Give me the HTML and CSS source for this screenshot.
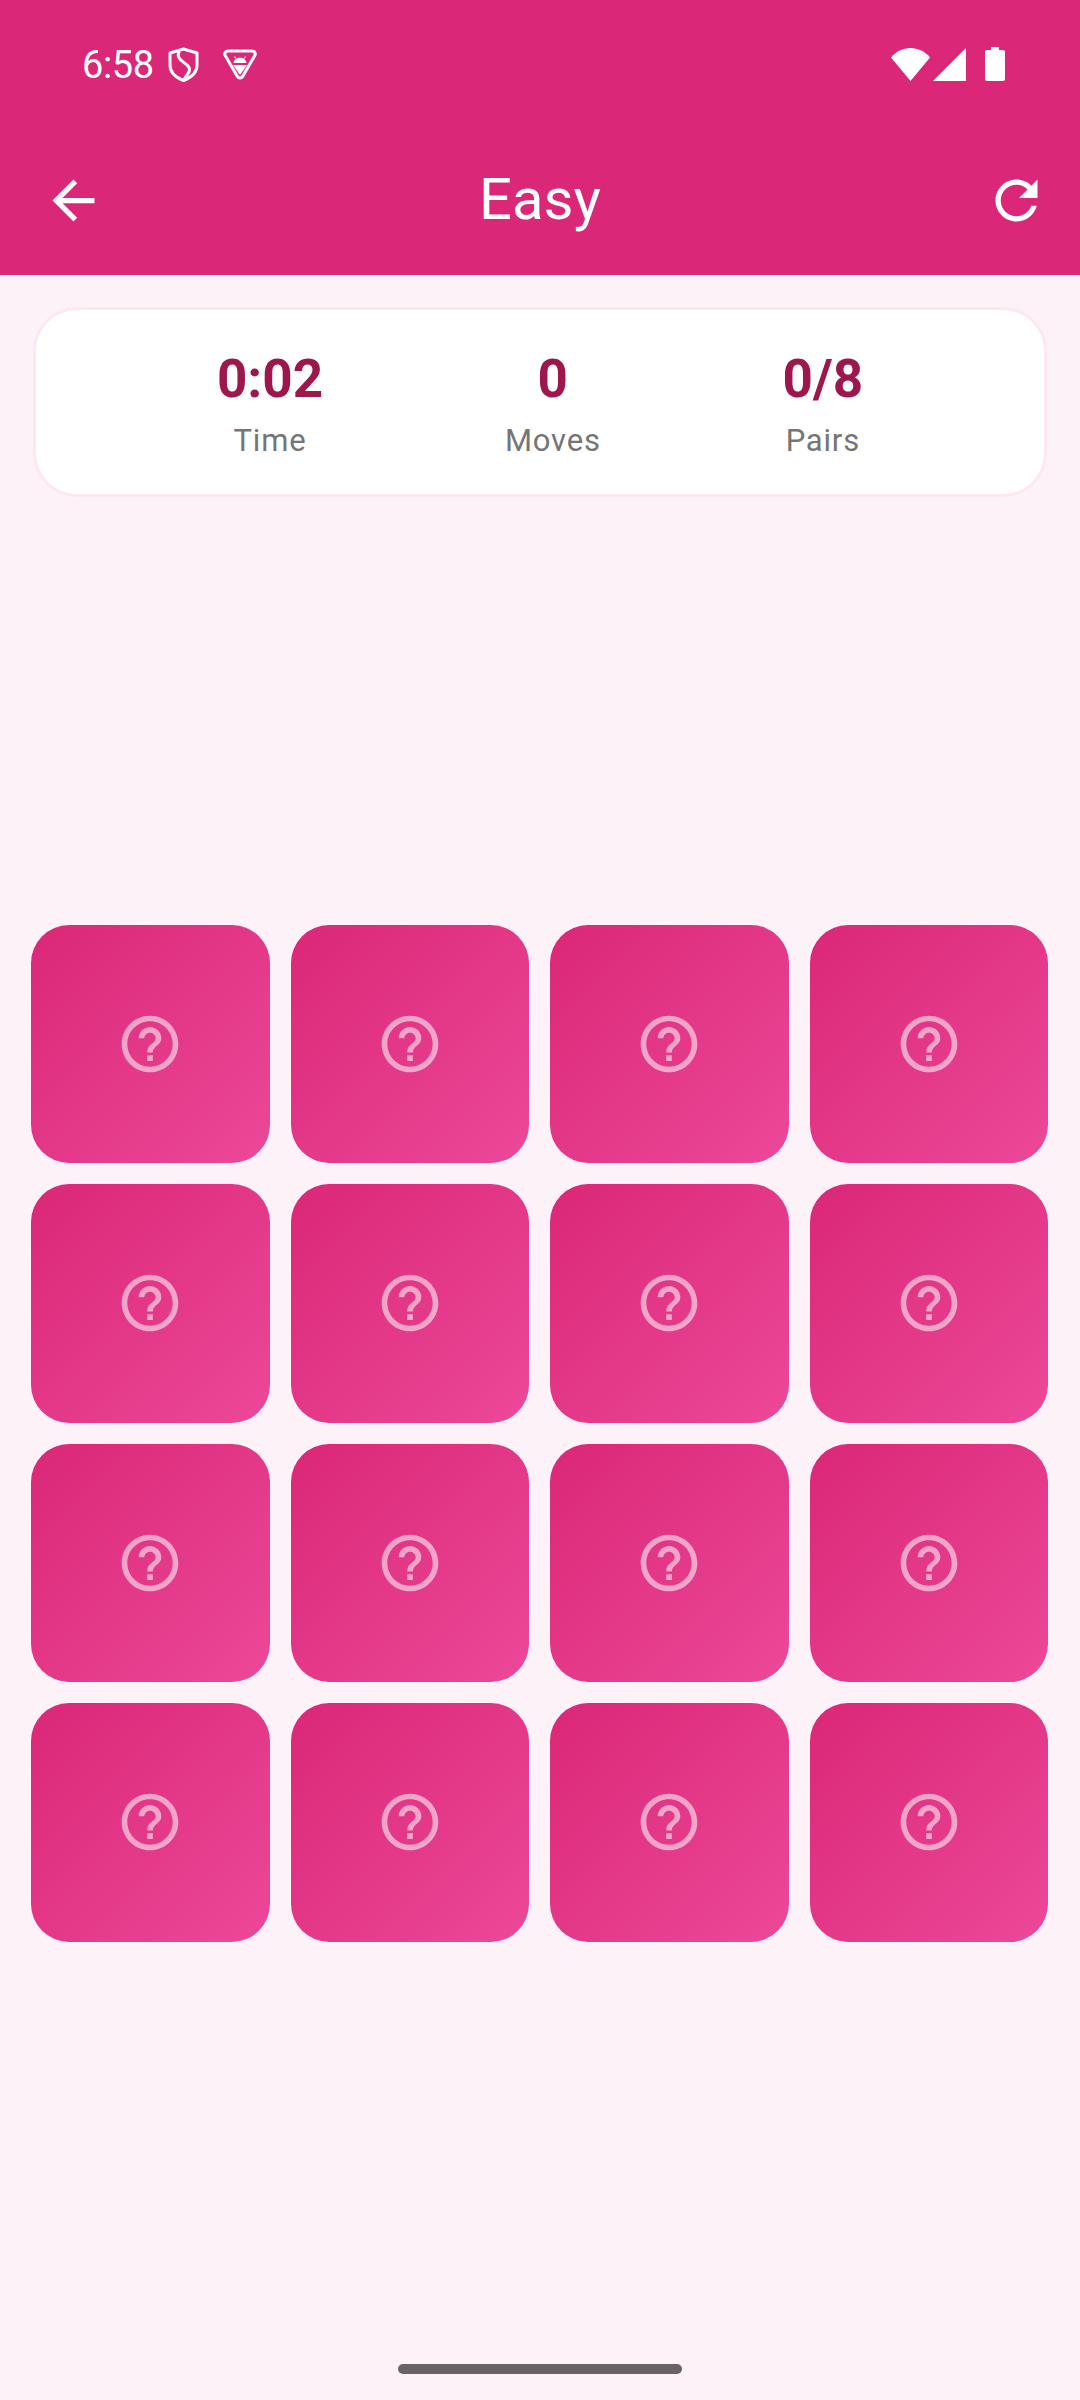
FILE: index.html
```html
<!DOCTYPE html>
<html lang="en">
<head>
<meta charset="utf-8">
<title>Easy</title>
<link rel="stylesheet" href="styles.css">
</head>
<body>
<div class="page">
  <header class="header">
    <div class="status">
      <div class="status-left">
        <span class="clock">6:58</span>
        <svg class="ic-shield" viewBox="0 0 31 35" fill="none" stroke="#fff" stroke-width="3"><path d="M15.500 2 29 6v12c0 7-5.500 12.500-13.500 15.500C7.500 30.500 2 25 2 18V6z" stroke-linejoin="round"/><path d="M11.500 4c-3 4.500-.5 8.500 5 12 5 3.200 6.500 6.500 3.500 10.500-1.500 2-3 4-4 6.500"/></svg>
        <svg class="ic-tri" viewBox="0 0 34 31" fill="none"><path d="M5 2h24c2.600 0 4 2.500 2.800 4.600L19.600 27.500c-1.200 2-4 2-5.200 0L2.200 6.600C1 4.500 2.400 2 5 2z" stroke="#fff" stroke-width="3"/><path d="M11.500 7.500l1.200 2M22.500 7.500l-1.200 2" stroke="#fff" stroke-width="1.200"/><path d="M10.500 14c.4-3.200 3.200-5.200 6.500-5.200s6.100 2 6.500 5.200zM10 16h14l-7 10z" fill="#fff"/></svg>
      </div>
      <div class="status-right">
        <svg class="ic-wifi" viewBox="0 0 39 33"><path d="M0 9.500C5 3.500 12 0 19.500 0S34 3.500 39 9.500L19.500 33z" fill="#fff"/></svg>
        <svg class="ic-signal" viewBox="0 0 33 33"><path d="M33 0v33H0z" fill="#fff"/></svg>
        <svg class="ic-battery" viewBox="0 0 20 34"><path d="M6 0h8v3h4c1.200 0 2 .8 2 2v27c0 1.200-.8 2-2 2H2c-1.200 0-2-.8-2-2V5c0-1.200.8-2 2-2h4z" fill="#fff"/></svg>
      </div>
    </div>
    <div class="appbar">
      <svg class="ic-back" viewBox="0 0 24 24"><path d="M20 11H7.830l5.590-5.590L12 4l-8 8 8 8 1.410-1.410L7.830 13H20v-2z" fill="#fff"/></svg>
      <h1 class="title">Easy</h1>
      <svg class="ic-refresh" viewBox="0 0 24 24"><path d="M17.650 6.350C16.200 4.900 14.210 4 12 4c-4.420 0-7.990 3.580-7.990 8s3.570 8 7.990 8c3.730 0 6.840-2.550 7.730-6h-2.080c-.82 2.330-3.040 4-5.650 4-3.310 0-6-2.690-6-6s2.690-6 6-6c1.660 0 3.140.69 4.220 1.780L13 11h7V4l-2.350 2.350z" fill="#fff"/></svg>
    </div>
  </header>
  <section class="stats">
    <div class="stat"><div class="stat-value">0:02</div><div class="stat-label">Time</div></div>
    <div class="stat"><div class="stat-value">0</div><div class="stat-label">Moves</div></div>
    <div class="stat"><div class="stat-value">0/8</div><div class="stat-label">Pairs</div></div>
  </section>
  <main class="board">
    <div class="tile"><svg class="ic-help" viewBox="0 0 24 24"><use href="#help"/></svg></div>
    <div class="tile"><svg class="ic-help" viewBox="0 0 24 24"><use href="#help"/></svg></div>
    <div class="tile"><svg class="ic-help" viewBox="0 0 24 24"><use href="#help"/></svg></div>
    <div class="tile"><svg class="ic-help" viewBox="0 0 24 24"><use href="#help"/></svg></div>
    <div class="tile"><svg class="ic-help" viewBox="0 0 24 24"><use href="#help"/></svg></div>
    <div class="tile"><svg class="ic-help" viewBox="0 0 24 24"><use href="#help"/></svg></div>
    <div class="tile"><svg class="ic-help" viewBox="0 0 24 24"><use href="#help"/></svg></div>
    <div class="tile"><svg class="ic-help" viewBox="0 0 24 24"><use href="#help"/></svg></div>
    <div class="tile"><svg class="ic-help" viewBox="0 0 24 24"><use href="#help"/></svg></div>
    <div class="tile"><svg class="ic-help" viewBox="0 0 24 24"><use href="#help"/></svg></div>
    <div class="tile"><svg class="ic-help" viewBox="0 0 24 24"><use href="#help"/></svg></div>
    <div class="tile"><svg class="ic-help" viewBox="0 0 24 24"><use href="#help"/></svg></div>
    <div class="tile"><svg class="ic-help" viewBox="0 0 24 24"><use href="#help"/></svg></div>
    <div class="tile"><svg class="ic-help" viewBox="0 0 24 24"><use href="#help"/></svg></div>
    <div class="tile"><svg class="ic-help" viewBox="0 0 24 24"><use href="#help"/></svg></div>
    <div class="tile"><svg class="ic-help" viewBox="0 0 24 24"><use href="#help"/></svg></div>
  </main>
  <div class="home-pill"></div>
</div>
<svg class="defs" width="0" height="0"><defs><path id="help" d="M11 18h2v-2h-2v2zm1-16C6.480 2 2 6.480 2 12s4.480 10 10 10 10-4.480 10-10S17.520 2 12 2zm0 18c-4.410 0-8-3.590-8-8s3.590-8 8-8 8 3.590 8 8-3.590 8-8 8zm0-14c-2.210 0-4 1.790-4 4h2c0-1.100.9-2 2-2s2 .9 2 2c0 2-3 1.750-3 5h2c0-2.250 3-2.500 3-5 0-2.210-1.790-4-4-4z" fill="#fff"/></defs></svg>
</body>
</html>
```

FILE: styles.css
```css
* { box-sizing: border-box; }
html, body { margin: 0; padding: 0; }
body { width: 1080px; height: 2400px; overflow: hidden; background: #fdf2f8; font-family: Roboto, "Liberation Sans", sans-serif; }
.page { height: 2400px; display: flex; flex-direction: column; }
.defs { display: block; }

.header { height: 275px; background: #db2777; color: #fff; padding-top: 46px; display: flex; flex-direction: column; flex: none; }
.status { height: 36px; padding: 0 75px 0 82px; display: flex; justify-content: space-between; align-items: center; }
.status-left { display: flex; align-items: center; }
.clock { font-size: 38px; line-height: 38px; letter-spacing: -0.4px; width: 86px; padding-top: 1px; }
.ic-shield { width: 31px; height: 35px; }
.ic-tri { width: 34px; height: 31px; margin-left: 24px; }
.status-right { display: flex; align-items: center; }
.ic-wifi { width: 39px; height: 33px; }
.ic-signal { width: 33px; height: 33px; margin-left: 3px; }
.ic-battery { width: 20px; height: 34px; margin-left: 19px; }

.appbar { margin-top: 86px; padding: 0 32px; height: 66px; display: grid; grid-template-columns: 1fr auto 1fr; align-items: start; }
.ic-back { width: 63px; height: 63px; margin: 1px 0 0 10px; }
.ic-refresh { width: 63px; height: 63px; margin-top: 1px; justify-self: end; }
.title { margin: 0; font-size: 58px; font-weight: 400; line-height: 62px; }

.stats { margin: 32px 33px 0; height: 190px; background: #fff; border: 3px solid #fce7f3; border-radius: 44px; padding: 3px 90px 0; display: flex; justify-content: space-around; align-items: center; flex: none; }
.stat { display: flex; flex-direction: column; align-items: center; }
.stat-value { font-size: 53px; font-weight: 700; line-height: 60px; color: #9d174d; }
.stat-label { font-size: 31px; line-height: 36px; margin-top: 14px; color: #757575; letter-spacing: 0.8px; }

.board { margin: 427.5px 32px 0 31px; display: grid; grid-template-columns: repeat(4, 1fr); gap: 21px; }
.tile { aspect-ratio: 1; border-radius: 38px; background: linear-gradient(135deg, #db2777, #ec4899); display: flex; align-items: center; justify-content: center; }
.ic-help { width: 68px; height: 68px; opacity: 0.55; }

.home-pill { width: 284px; height: 10px; border-radius: 5px; background: #686365; margin: auto auto 26px; }
```
